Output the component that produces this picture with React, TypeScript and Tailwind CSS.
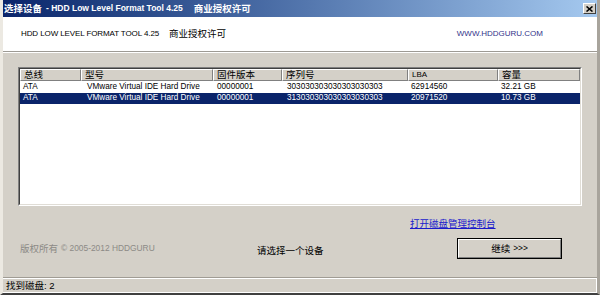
const rows = [
  {
    bus: "ATA",
    model: "VMware Virtual IDE Hard Drive",
    fw: "00000001",
    serial: "303030303030303030303",
    lba: "62914560",
    size: "32.21 GB",
    selected: false,
  },
  {
    bus: "ATA",
    model: "VMware Virtual IDE Hard Drive",
    fw: "00000001",
    serial: "313030303030303030303",
    lba: "20971520",
    size: "10.73 GB",
    selected: true,
  },
];

const columns = [
  { label: "总线", width: "w-[61px]" },
  { label: "型号", width: "w-[132px]" },
  { label: "固件版本", width: "w-[69px]" },
  { label: "序列号", width: "w-[126px]" },
  { label: "LBA", width: "w-[90px]" },
  { label: "容量", width: "w-[82px]" },
];

function Cjk({ children, className = "" }: { children: React.ReactNode; className?: string }) {
  return <span className={`text-[9.5px] leading-none ${className}`}>{children}</span>;
}

export default function App() {
  return (
    <div className="flex h-[295px] w-[600px] flex-col overflow-hidden border-l-[3px] border-r-[3px] border-b-[2px] border-l-[#ece9e2] border-r-[#a8a49c] border-b-[#404040] bg-[#d4d0c8] font-['Liberation_Sans','Noto_Sans_CJK_SC',sans-serif] text-black">
      {/* title bar */}
      <div className="-mx-[3px] flex h-[17px] shrink-0 items-center justify-between bg-gradient-to-r from-[#0a246a] to-[#a6caf0] pl-[4px] pr-[4px] text-white">
        <div className="flex items-center gap-[4px] font-bold">
          <Cjk className="font-bold">选择设备</Cjk>
          <span className="text-[8.5px] leading-none">- HDD Low Level Format Tool 4.25</span>
          <Cjk className="ml-[7px] font-bold">商业授权许可</Cjk>
        </div>
        <div className="flex h-[11px] w-[13px] items-center justify-center border border-t-white border-l-white border-r-[#404040] border-b-[#404040] bg-[#d4d0c8]">
          <svg width="7" height="6" viewBox="0 0 7 6">
            <path d="M0.5 0.5 L6.5 5.5 M6.5 0.5 L0.5 5.5" stroke="#000" strokeWidth="1.6" />
          </svg>
        </div>
      </div>

      {/* header */}
      <div className="flex h-[35px] shrink-0 items-center border-b border-b-[#9d9a94] bg-white pl-[18px] pr-[54px]">
        <span className="text-[8px] leading-none tracking-[-0.1px]">HDD LOW LEVEL FORMAT TOOL 4.25</span>
        <Cjk className="ml-[10px]">商业授权许可</Cjk>
        <span className="ml-auto text-[8px] leading-none text-[#33338a]">WWW.HDDGURU.COM</span>
      </div>
      <div className="h-px shrink-0 bg-white" />

      {/* body */}
      <div className="flex flex-1 flex-col pl-[15px]">
        <div className="mt-[14px] h-[139px] w-[564px] border border-t-[#808080] border-l-[#808080] border-r-white border-b-white">
          <div className="h-full w-full border border-t-[#404040] border-l-[#404040] border-r-[#e0ddd6] border-b-[#e0ddd6] bg-white">
            <div className="flex h-[12px]">
              {columns.map((c) => (
                <div
                  key={c.label}
                  className={`${c.width} flex items-center border border-t-white border-l-white border-r-[#808080] border-b-[#808080] bg-[#d4d0c8] pl-[3px]`}
                >
                  {c.label === "LBA" ? (
                    <span className="text-[8px] leading-none">LBA</span>
                  ) : (
                    <Cjk>{c.label}</Cjk>
                  )}
                </div>
              ))}
            </div>
            <div className="mt-px">
              {rows.map((r, i) => (
                <div
                  key={i}
                  className={`flex h-[11px] w-[560px] items-center text-[8.2px] leading-none ${
                    r.selected ? "bg-[#0a246a] text-white" : ""
                  }`}
                >
                  <div className="w-[61px] pl-[3px]">{r.bus}</div>
                  <div className="w-[132px] pl-[6px]">{r.model}</div>
                  <div className="w-[69px] pl-[4px]">{r.fw}</div>
                  <div className="w-[126px] pl-[5px]">{r.serial}</div>
                  <div className="w-[90px] pl-[3px]">{r.lba}</div>
                  <div className="w-[82px] pl-[3px]">{r.size}</div>
                </div>
              ))}
            </div>
          </div>
        </div>

        <div className="mt-[12px] flex h-[12px] items-center pl-[392px]">
          <Cjk className="text-[#1a1acc] underline decoration-[#1a1acc]">打开磁盘管理控制台</Cjk>
        </div>

        <div className="mt-[8px] flex h-[21px] items-center">
          <div className="flex w-[239px] items-center pl-[2px] text-[#8c8a86]">
            <Cjk>版权所有</Cjk>
            <span className="ml-[3px] text-[8.4px] leading-none">© 2005-2012 HDDGURU</span>
          </div>
          <div className="w-[200px]">
            <Cjk>请选择一个设备</Cjk>
          </div>
          <div className="flex h-[21px] w-[105px] border border-black">
            <div className="flex flex-1 items-center justify-center gap-[3px] border border-t-white border-l-white border-r-[#808080] border-b-[#808080] bg-[#d4d0c8]">
              <Cjk>继续</Cjk>
              <span className="text-[8.4px] leading-none">&gt;&gt;&gt;</span>
            </div>
          </div>
        </div>
        <div className="flex-1" />
      </div>

      {/* status bar */}
      <div className="h-px shrink-0 bg-[#a09c94]" />
      <div className="h-px shrink-0 bg-white" />
      <div className="flex h-[14px] shrink-0 items-center border-r border-b border-r-white border-b-white pl-[3px]">
        <Cjk>找到磁盘: 2</Cjk>
      </div>
    </div>
  );
}
